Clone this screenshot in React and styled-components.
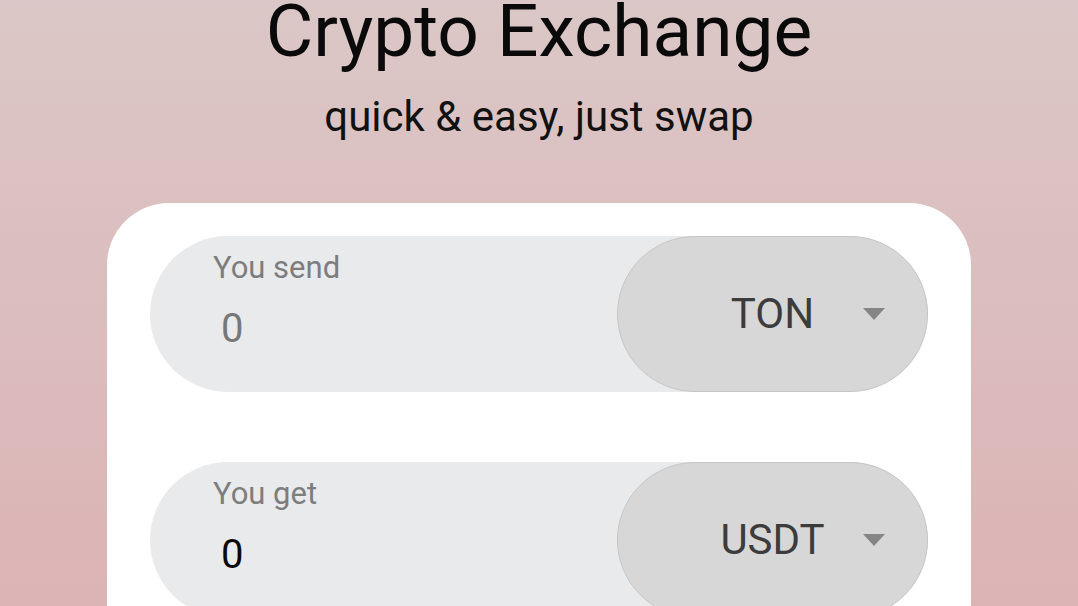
import React from 'react'
import styled, { createGlobalStyle } from 'styled-components'

const GlobalStyle = createGlobalStyle`
  html, body {
    margin: 0;
    padding: 0;
    height: 100%;
    overflow: hidden;
  }
  body {
    font-family: Roboto, "Liberation Sans", sans-serif;
  }
`

const Page = styled.div`
  min-height: 100vh;
  background: linear-gradient(180deg, #dbc7c7 0%, #dcb1b2 100%);
  display: flex;
  flex-direction: column;
  align-items: center;
`

const Title = styled.h1`
  margin: 0;
  font-size: 73px;
  font-weight: 400;
  line-height: 62px;
  color: #0a0a0a;
  white-space: nowrap;
`

const Subtitle = styled.p`
  margin: 30px 0 0;
  font-size: 42px;
  line-height: 50px;
  color: #111;
`

const Card = styled.div`
  margin-top: 61px;
  width: 864px;
  box-sizing: border-box;
  background: #fff;
  border-radius: 62px;
  padding: 33px 43px 60px;
  display: flex;
  flex-direction: column;
  gap: 70px;
`

const Field = styled.div`
  height: 156px;
  border-radius: 78px;
  background: #e9eaec;
  display: flex;
  align-items: stretch;
`

const Amount = styled.div`
  flex: 1;
  padding: 14px 0 0 63px;
  display: flex;
  flex-direction: column;
  align-items: flex-start;
`

const Label = styled.span`
  font-size: 31px;
  line-height: 36px;
  color: #7d7d7d;
`

const Value = styled.span`
  margin: 20px 0 0 8px;
  font-size: 40px;
  line-height: 46px;
  color: ${p => (p.$muted ? '#777' : '#0a0a0a')};
`

const Select = styled.div`
  position: relative;
  width: 311px;
  box-sizing: border-box;
  border-radius: 78px;
  background: #d7d7d7;
  border: 1px solid #c6c6c6;
  display: flex;
  align-items: center;
  justify-content: center;
  padding-bottom: 2px;
  font-size: 42px;
  color: #3c3c3c;
`

const Arrow = styled.svg`
  position: absolute;
  right: 42px;
  top: 50%;
  transform: translateY(-50%);
`

const Coin = ({ name }) => (
  <Select>
    {name}
    <Arrow width="22" height="12" viewBox="0 0 22 12">
      <path d="M0 0 L22 0 L11 12 Z" fill="#858585" />
    </Arrow>
  </Select>
)

const App = () => (
  <Page>
    <GlobalStyle />
    <Title>Crypto Exchange</Title>
    <Subtitle>quick &amp; easy, just swap</Subtitle>
    <Card>
      <Field>
        <Amount>
          <Label>You send</Label>
          <Value $muted>0</Value>
        </Amount>
        <Coin name="TON" />
      </Field>
      <Field>
        <Amount>
          <Label>You get</Label>
          <Value>0</Value>
        </Amount>
        <Coin name="USDT" />
      </Field>
    </Card>
  </Page>
)

export default App
